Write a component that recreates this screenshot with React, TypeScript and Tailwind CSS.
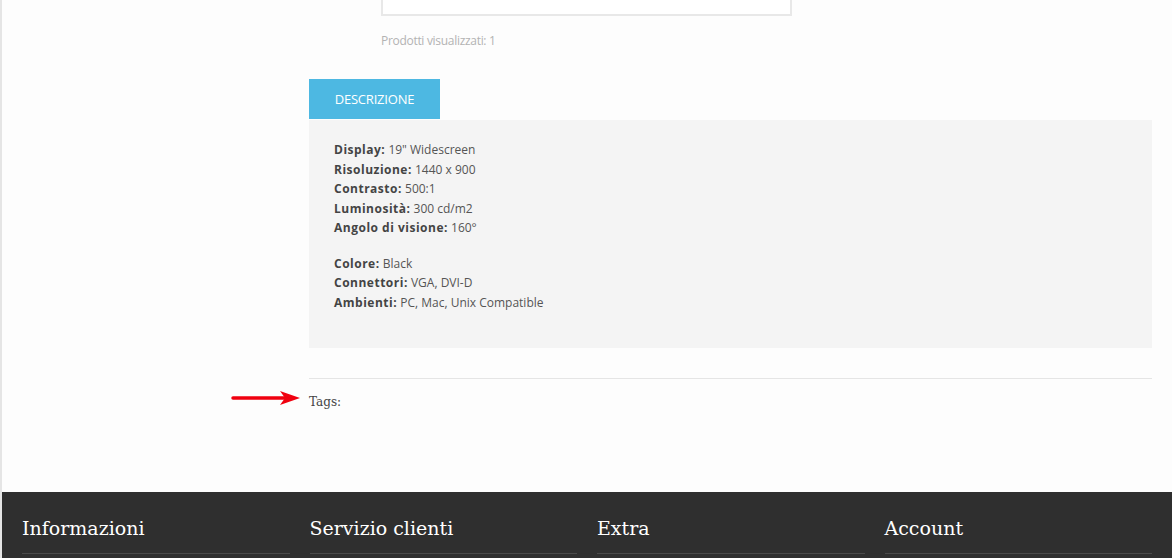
const specs: [string, string][] = [
  ['Display:', '19" Widescreen'],
  ['Risoluzione:', '1440 x 900'],
  ['Contrasto:', '500:1'],
  ['Luminosità:', '300 cd/m2'],
  ['Angolo di visione:', '160°'],
]

const extras: [string, string][] = [
  ['Colore:', 'Black'],
  ['Connettori:', 'VGA, DVI-D'],
  ['Ambienti:', 'PC, Mac, Unix Compatible'],
]

const footerCols = ['Informazioni', 'Servizio clienti', 'Extra', 'Account']

function SpecList({ rows }: { rows: [string, string][] }) {
  return (
    <div className="flex flex-col">
      {rows.map(([label, value]) => (
        <p key={label} className="text-[12px] leading-[19.5px] text-[#555]">
          <b className="font-bold text-[#444] tracking-[0.5px]">{label}</b> {value}
        </p>
      ))}
    </div>
  )
}

export default function App() {
  return (
    <div className="h-[558px] overflow-hidden bg-[#fdfdfd] border-l-2 border-[#e5e5e5] flex flex-col" style={{ fontFamily: '"Open Sans", sans-serif' }}>
      <div className="h-[492px] flex flex-col pl-[307px] pr-5">
        {/* viewed products box */}
        <div className="ml-[72px] w-[411px] h-[16px] border-x-2 border-b-2 border-[#e8e8e8] bg-white" />
        <p className="ml-[72px] mt-[16px] text-[12px] leading-[18px] text-[#b3b3b3] tracking-[-0.3px]">Prodotti visualizzati: 1</p>

        {/* tabs */}
        <div className="mt-[29px] flex">
          <div className="w-[131px] h-[40px] pt-[1px] bg-[#4db8e2] text-white text-[13px] flex items-center justify-center tracking-[-0.2px]">DESCRIZIONE</div>
        </div>
        <div className="mt-[1px] h-[228px] bg-[#f4f4f4] pl-[25px] pt-[20px] flex flex-col gap-[16px]">
          <SpecList rows={specs} />
          <SpecList rows={extras} />
        </div>

        <div className="mt-[30px] border-t border-[#e5e5e5]" />
        <div className="relative mt-[9px]">
          <span className="text-[12px] text-[#444]" style={{ fontFamily: '"DejaVu Serif", serif' }}>Tags:</span>
          <svg className="absolute left-[-79px] top-[2px]" width="72" height="16" viewBox="0 0 72 16">
            <line x1="3" y1="8" x2="54" y2="8" stroke="#f0000f" strokeWidth="3.5" strokeLinecap="round" />
            <path d="M50 1 L70 8 L50 15 L55 8 Z" fill="#f0000f" />
          </svg>
        </div>
      </div>

      <footer className="flex-1 bg-[#2f2f2f] px-5 pt-[22px] grid grid-cols-4 gap-5">
        {footerCols.map(title => (
          <div key={title}>
            <h4 className="text-[19px] leading-[28px] text-white pb-[11px] border-b border-[#4a4a4a]" style={{ fontFamily: '"DejaVu Serif", serif' }}>{title}</h4>
          </div>
        ))}
      </footer>
    </div>
  )
}
